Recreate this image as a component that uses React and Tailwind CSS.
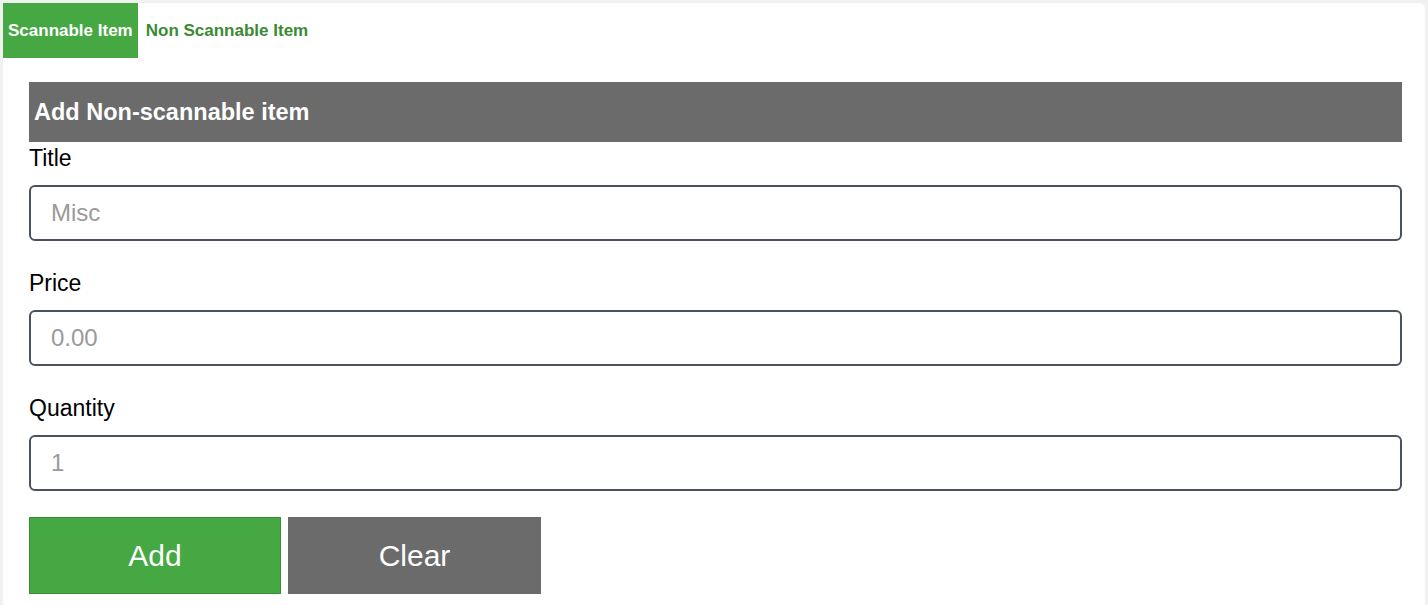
const Field = ({ label, placeholder }) => (
  <div className="flex flex-col">
    <label className="text-[23px] leading-[32px] text-black mb-[11px]">{label}</label>
    <input
      type="text"
      placeholder={placeholder}
      className="h-[56px] w-full rounded-[6px] border-2 border-[#4a5260] bg-white px-[20px] text-[24px] text-black placeholder:text-[#9a9a9a] outline-none"
    />
  </div>
);

export default function App() {
  return (
    <div
      className="min-h-[605px] bg-[#f1f1f1] pt-[3px] pl-[3px] pr-[3px]"
      style={{ fontFamily: '"Liberation Sans", Arial, sans-serif' }}
    >
      <div className="min-h-[602px] bg-white rounded-tr-[6px]">
        {/* tabs */}
        <div className="flex h-[55px] items-stretch">
          <button className="bg-[#46a843] px-[5px] text-[17px] font-bold text-white">Scannable Item</button>
          <button className="px-[8px] text-[17px] font-bold text-[#3a8a34]">Non Scannable Item</button>
        </div>

        <div className="pl-[26px] pr-[23px] pt-[24px]">
          <div className="flex h-[60px] items-center bg-[#6b6b6b] px-[5px] pt-[2px]">
            <h2 className="text-[23.5px] font-bold text-white">Add Non-scannable item</h2>
          </div>

          <div className="flex flex-col gap-[26px]">
            <Field label="Title" placeholder="Misc" />
            <Field label="Price" placeholder="0.00" />
            <Field label="Quantity" placeholder="1" />
          </div>

          <div className="mt-[26px] flex gap-[7px]">
            <button className="h-[77px] w-[252px] border border-[#3b8e38] bg-[#46a843] text-[30px] text-white">Add</button>
            <button className="h-[77px] w-[253px] bg-[#6b6b6b] text-[30px] text-white">Clear</button>
          </div>
        </div>
      </div>
    </div>
  );
}
